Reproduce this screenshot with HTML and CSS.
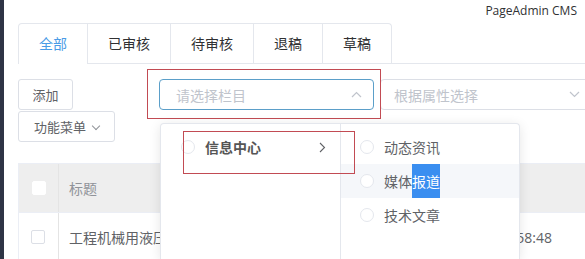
FILE: index.html
```html
<!DOCTYPE html>
<html lang="zh-CN">
<head>
    <meta charset="UTF-8">
    <title>PageAdmin CMS</title>
    <link rel="stylesheet" href="styles.css">
</head>
<body>
    <div class="sidebar"></div>
    <div class="main">
        <div class="topbar">PageAdmin CMS</div>

        <div class="tabs">
            <div class="tab active">全部</div>
            <div class="tab">已审核</div>
            <div class="tab">待审核</div>
            <div class="tab">退稿</div>
            <div class="tab">草稿</div>
        </div>

        <div class="toolbar">
            <div class="btns">
                <button class="btn">添加</button>
                <button class="btn">功能菜单 <span class="caret"></span></button>
            </div>
            <div class="select focus">
                <span>请选择栏目</span>
                <svg width="11" height="7" viewBox="0 0 11 7"><path d="M1 6 L5.5 1.5 L10 6" fill="none" stroke="#c0c4cc" stroke-width="1.2"/></svg>
            </div>
            <div class="select wide">
                <span>根据属性选择</span>
                <svg width="11" height="7" viewBox="0 0 11 7"><path d="M1 1 L5.5 5.5 L10 1" fill="none" stroke="#c0c4cc" stroke-width="1.2"/></svg>
            </div>
        </div>

        <div class="table">
            <div class="row head">
                <div class="cell check"><span class="box"></span></div>
                <div class="cell title">标题</div>
            </div>
            <div class="row">
                <div class="cell check"><span class="box"></span></div>
                <div class="cell title body-text">工程机械用液压油的选择</div>
                <div class="cell date">2019-06-18 16:58:48</div>
            </div>
        </div>
    </div>

    <div class="mark mark-select"></div>

    <div class="cascader">
        <ul class="menu">
            <li class="item parent">
                <span class="radio"></span>
                <span class="label">信息中心</span>
                <svg class="arrow" width="7" height="11" viewBox="0 0 7 11"><path d="M1 1 L5.5 5.5 L1 10" fill="none" stroke="#606266" stroke-width="1.1"/></svg>
            </li>
        </ul>
        <ul class="menu">
            <li class="item"><span class="radio"></span><span class="label">动态资讯</span></li>
            <li class="item hover"><span class="radio"></span><span class="label">媒体<span class="sel">报道</span></span></li>
            <li class="item"><span class="radio"></span><span class="label">技术文章</span></li>
        </ul>
        <div class="mark mark-item"></div>
    </div>
</body>
</html>
```

FILE: styles.css
```css
body {
    margin: 0;
    display: flex;
    height: 259px;
    overflow: hidden;
    background: #fff;
    font-family: "Noto Sans CJK SC", "Noto Sans", sans-serif;
    font-size: 14px;
    color: #606266;
}

.sidebar {
    width: 4px;
    background: #2e3445;
    flex-shrink: 0;
}

.main {
    flex: 1;
    padding-left: 14px;
    min-width: 0;
}

.topbar {
    height: 23px;
    text-align: right;
    padding-right: 8px;
    font-family: "Open Sans", "Noto Sans", sans-serif;
    font-size: 12px;
    line-height: 22px;
    color: #303133;
}

.tabs {
    display: flex;
    border-bottom: 1px solid #e4e7ed;
    height: 40px;
}

.tab {
    height: 40px;
    line-height: 39px;
    padding: 0 20px;
    border: 1px solid #e4e7ed;
    border-left: none;
    border-bottom: none;
    color: #303133;
    box-sizing: border-box;
}

.tab:first-child {
    border-left: 1px solid #e4e7ed;
    border-radius: 4px 0 0 0;
}

.tab:last-child {
    border-radius: 0 4px 0 0;
}

.tab.active {
    color: #4a9be6;
    background: #fff;
    height: 41px;
}

.toolbar {
    display: flex;
    align-items: flex-start;
    margin-top: 15px;
}

.btns {
    width: 141px;
    display: flex;
    flex-direction: column;
    align-items: flex-start;
    gap: 1px;
    flex-shrink: 0;
}

.btn {
    height: 31px;
    padding: 0;
    border: 1px solid #dcdfe6;
    border-radius: 3px;
    background: #fff;
    font-family: "Noto Sans CJK SC", sans-serif;
    font-size: 13px;
    color: #606266;
    white-space: nowrap;
}

.btns .btn:first-child {
    width: 55px;
}

.btns .btn:last-child {
    width: 97px;
    text-align: left;
    padding-left: 15px;
}

.caret {
    display: inline-block;
    width: 5px;
    height: 5px;
    border-right: 1px solid #909399;
    border-bottom: 1px solid #909399;
    transform: rotate(45deg);
    margin: 0 0 3px 4px;
}

.select {
    width: 215px;
    height: 31px;
    box-sizing: border-box;
    border: 1px solid #dcdfe6;
    border-radius: 4px;
    display: flex;
    align-items: center;
    justify-content: space-between;
    padding: 0 11px 0 16px;
    color: #c0c4cc;
    flex-shrink: 0;
}

.select.focus {
    border-color: #5b9fc9;
}

.select.wide {
    width: 212px;
    margin-left: 6px;
    padding-left: 13px;
}

.table {
    margin-top: 21px;
    border-top: 1px solid #ebeef5;
    border-left: 1px solid #ebeef5;
}

.row {
    display: flex;
    height: 48px;
    border-bottom: 1px solid #ebeef5;
}

.row.head {
    background: #eeeeee;
    color: #909399;
}

.cell {
    display: flex;
    align-items: center;
}

.check {
    width: 39px;
    border-right: 1px solid #e4e4e4;
    justify-content: center;
}

.box {
    width: 12px;
    height: 12px;
    border: 1px solid #dcdfe6;
    border-radius: 2px;
    background: #fff;
}

.head .box {
    border-color: #fff;
}

.row:not(.head) .check {
    justify-content: flex-start;
    padding-left: 12px;
    width: 27px;
}

.title {
    padding-left: 10px;
    flex: 1;
    white-space: nowrap;
    overflow: hidden;
}

.date {
    padding-right: 33px;
    font-family: "Open Sans", sans-serif;
    white-space: nowrap;
}

.mark {
    position: absolute;
    border: 1px solid #c24b53;
    box-sizing: border-box;
}

.mark-select {
    left: 147px;
    top: 69px;
    width: 234px;
    height: 50px;
}

.cascader {
    position: absolute;
    left: 160px;
    top: 123px;
    width: 360px;
    height: 136px;
    display: flex;
    background: #fff;
    border: 1px solid #e4e7ed;
    border-bottom: none;
    border-radius: 4px 4px 0 0;
    box-shadow: 0 2px 12px rgba(0, 0, 0, 0.1);
    box-sizing: border-box;
}

.menu {
    list-style: none;
    margin: 0;
    padding: 6px 0;
    width: 180px;
    box-sizing: border-box;
}

.menu + .menu {
    border-left: 1px solid #e4e7ed;
}

.item {
    position: relative;
    height: 34px;
    display: flex;
    align-items: center;
    padding-left: 19px;
    color: #606266;
}

.item.parent {
    padding-left: 20px;
    font-weight: bold;
    color: #555;
}

.item.hover {
    background: #f5f7fa;
}

.radio {
    width: 12px;
    height: 12px;
    border: 1px solid #e4e7ed;
    border-radius: 50%;
    margin-right: 10px;
    background: #fff;
}

.sel {
    display: inline-block;
    background: #3a8ef0;
    color: #fff;
    line-height: 34px;
}

.arrow {
    position: absolute;
    right: 14px;
    top: 12px;
}

.mark-item {
    left: 22px;
    top: 7px;
    width: 172px;
    height: 43px;
}
```
